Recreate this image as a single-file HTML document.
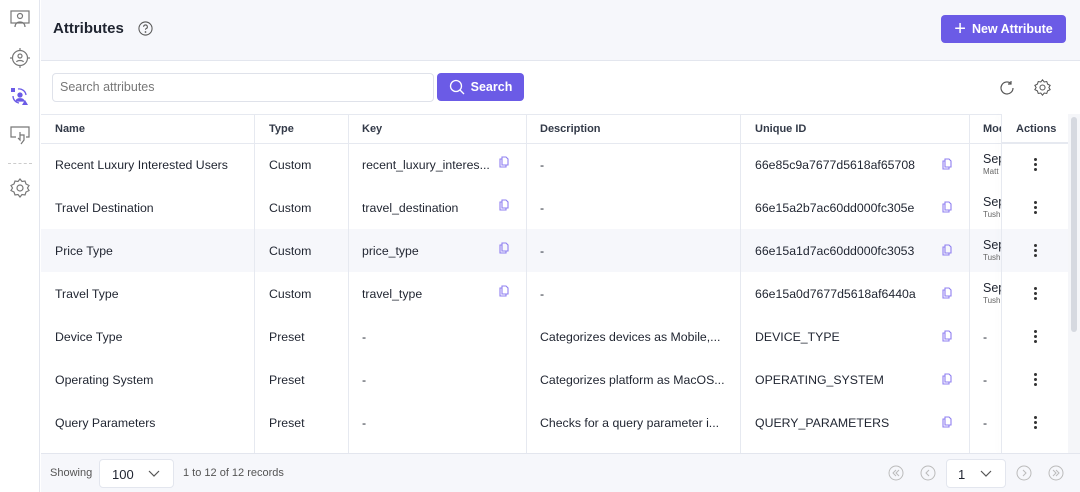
<!DOCTYPE html>
<html><head><meta charset="utf-8"><style>
*{box-sizing:border-box;margin:0;padding:0}
body{width:1080px;height:492px;overflow:hidden;background:#fff;font-family:"Liberation Sans",sans-serif;color:#1f2430;position:relative;font-size:12.3px}
.abs{position:absolute}
.side{left:0;top:0;width:40px;height:492px;background:#fff;border-right:1px solid #e3e6ee}
.hdr{left:41px;top:0;width:1039px;height:61px;background:#f6f7fb;border-bottom:1px solid #e3e6ee}
.btn{background:#6b5be6;color:#fff;border-radius:4px;font-weight:bold;font-size:12.5px;display:flex;align-items:center;justify-content:center;gap:6px}
.cell{position:absolute;display:flex;align-items:center;white-space:nowrap;overflow:hidden}
.vl{position:absolute;top:114px;width:1px;height:339px;background:#e6e9f0}
.hl{position:absolute;left:41px;width:1027px;height:1px;background:#e6e9f0}
.th{font-weight:bold;font-size:11px;color:#333a48}
.copy{position:absolute;width:10px;height:12px}
.dots{position:absolute;width:3px}
.dots i{display:block;width:3px;height:3px;border-radius:50%;background:#333;margin-bottom:2px}
</style></head><body>
<div class="abs side">
<svg class="abs" style="left:10px;top:10px" width="20" height="18" viewBox="0 0 20 18" fill="none" stroke="#777" stroke-width="1.2"><rect x="1" y="1" width="18" height="12"/><circle cx="10" cy="6" r="2.5"/><path d="M5 17c0-3 2-5 5-5s5 2 5 5"/></svg>
<svg class="abs" style="left:10px;top:48px" width="20" height="20" viewBox="0 0 20 20" fill="none" stroke="#777" stroke-width="1.2"><circle cx="10" cy="10" r="7.5"/><circle cx="10" cy="8" r="2"/><path d="M6.5 14c1-2 6-2 7 0M10 0v3M10 17v3M0 10h3M17 10h3"/></svg>
<svg class="abs" style="left:9px;top:86px" width="22" height="20" viewBox="0 0 22 20" fill="#6b5be6" stroke="#6b5be6" stroke-width="1.3"><rect x="2" y="2" width="4" height="4" stroke="none"/><circle cx="11" cy="9" r="2"/><path d="M7 15c1-3 7-3 8 0z"/><path d="M16 14l3 5h-6z" stroke="none"/><path d="M9 3a7 7 0 0 1 8 6M4 10a7 7 0 0 0 6 7" fill="none"/></svg>
<svg class="abs" style="left:10px;top:126px" width="20" height="20" viewBox="0 0 20 20" fill="none" stroke="#777" stroke-width="1.2"><path d="M6 11H1V1h18v10h-3"/><path d="M10 6v8l-2-2M10 9h4v5l-3 4"/></svg>
<div class="abs" style="left:8px;top:163px;width:24px;border-top:1px dashed #ccc"></div>
<svg class="abs" style="left:10px;top:178px" width="20" height="20" viewBox="0 0 20 20" fill="none" stroke="#777" stroke-width="1.2"><path d="M10 1l2 2.5 3-.5 1 3 3 1.5-1.5 2.5 1.5 2.5-3 1.5-1 3-3-.5L10 19l-2-2.5-3 .5-1-3-3-1.5L2.5 10 1 7.5 4 6l1-3 3 .5z"/><circle cx="10" cy="10" r="3"/></svg>
</div>
<div class="abs hdr">
<div class="abs" style="left:12px;top:20px;font-size:15px;font-weight:bold;color:#1f2430">Attributes</div>
<svg class="abs" style="left:97px;top:21px" width="15" height="15" viewBox="0 0 16 16" fill="none" stroke="#555" stroke-width="1.1"><circle cx="8" cy="8" r="7"/><path d="M6 6.2a2 2 0 1 1 2.6 1.9c-.5.2-.6.5-.6 1.2"/><circle cx="8" cy="11.7" r=".4" fill="#555"/></svg>
<div class="abs btn" style="left:900px;top:15px;width:125px;height:28px;font-size:12.5px"><span style="font-size:20px;font-weight:normal;line-height:1">+</span>New Attribute</div>
</div>
<div class="abs" style="left:52px;top:73px;width:382px;height:29px;border:1px solid #dfe2ea;border-radius:4px;padding-left:7px;line-height:27px;color:#777;font-size:12.5px">Search attributes</div>
<div class="abs btn" style="left:437px;top:73px;width:87px;height:28px"><svg width="16" height="16" viewBox="0 0 16 16" fill="none" stroke="#fff" stroke-width="1.3"><circle cx="7" cy="7" r="5.5"/><path d="M11 11l4 4"/></svg>Search</div>
<svg class="abs" style="left:999px;top:80px" width="16" height="16" viewBox="0 0 16 16" fill="none" stroke="#555" stroke-width="1.2"><path d="M14 8a6 6 0 1 1-2-4.5M12 1v3h-3"/></svg>
<svg class="abs" style="left:1034px;top:79px" width="17" height="17" viewBox="0 0 20 20" fill="none" stroke="#555" stroke-width="1.2"><path d="M10 1l2 2.5 3-.5 1 3 3 1.5-1.5 2.5 1.5 2.5-3 1.5-1 3-3-.5L10 19l-2-2.5-3 .5-1-3-3-1.5L2.5 10 1 7.5 4 6l1-3 3 .5z"/><circle cx="10" cy="10" r="3"/></svg>
<div class="hl" style="top:114px"></div>
<div class="hl" style="top:143px"></div>
<div class="abs" style="left:41px;top:229px;width:1027px;height:43px;background:#f6f7fb"></div>
<div class="vl" style="left:254px"></div><div class="vl" style="left:348px"></div><div class="vl" style="left:526px"></div><div class="vl" style="left:740px"></div><div class="vl" style="left:969px"></div>
<div class="abs" style="left:1001px;top:114px;width:1px;height:339px;background:#e6e9f0;box-shadow:-3px 0 5px rgba(0,0,0,.05)"></div>
<div class="abs" style="left:1001px;top:114px;width:67px;height:29px;background:#fff;border-bottom:1px solid #e6e9f0;border-left:1px solid #e6e9f0"></div>
<div class="abs" style="left:1068px;top:114px;width:12px;height:339px;background:#f5f6f9"></div>
<div class="abs" style="left:1071px;top:117px;width:6px;height:215px;background:#d6d9e0;border-radius:3px"></div>
<div class="cell th" style="left:55px;top:114px;height:29px">Name</div>
<div class="cell th" style="left:269px;top:114px;height:29px">Type</div>
<div class="cell th" style="left:362px;top:114px;height:29px">Key</div>
<div class="cell th" style="left:540px;top:114px;height:29px">Description</div>
<div class="cell th" style="left:755px;top:114px;height:29px">Unique ID</div>
<div class="cell th" style="left:983px;top:114px;height:29px;width:18px">Modified</div>
<div class="cell th" style="left:1016px;top:114px;height:29px">Actions</div>
<div id="rows"></div>
<div class="abs" style="left:41px;top:453px;width:1039px;height:39px;background:#f6f7fb;border-top:1px solid #e3e6ee"></div>
<div class="abs" style="left:50px;top:467px;font-size:11px;color:#555">Showing</div>
<div class="abs" style="left:99px;top:459px;width:75px;height:29px;background:#fff;border:1px solid #e3e6ee;border-radius:4px;font-size:13px;padding:7px 0 0 12px">100<svg class="abs" style="left:48px;top:10px" width="12" height="8" viewBox="0 0 12 8" fill="none" stroke="#555" stroke-width="1.2"><path d="M1 1l5 5 5-5"/></svg></div>
<div class="abs" style="left:183px;top:467px;font-size:11px;color:#555">1 to 12 of 12 records</div>
<svg class="abs" style="left:888px;top:465px;" width="180" height="16" viewBox="0 0 180 16" fill="none" stroke="#bbb" stroke-width="1"><circle cx="8" cy="8" r="7"/><path d="M8 5l-3 3 3 3M11 5l-3 3 3 3"/><circle cx="40" cy="8" r="7"/><path d="M41 5l-3 3 3 3"/><circle cx="136" cy="8" r="7"/><path d="M135 5l3 3-3 3"/><circle cx="168" cy="8" r="7"/><path d="M165 5l3 3-3 3M168 5l3 3-3 3"/></svg>
<div class="abs" style="left:946px;top:459px;width:60px;height:29px;background:#fff;border:1px solid #e3e6ee;border-radius:4px;font-size:13px;padding:7px 0 0 11px">1<svg class="abs" style="left:33px;top:10px" width="12" height="8" viewBox="0 0 12 8" fill="none" stroke="#555" stroke-width="1.2"><path d="M1 1l5 5 5-5"/></svg></div>
<script>
var R=[["Recent Luxury Interested Users","Custom","recent_luxury_interes...","-","66e85c9a7677d5618af65708","Sep","Matt",1],
["Travel Destination","Custom","travel_destination","-","66e15a2b7ac60dd000fc305e","Sep","Tush",1],
["Price Type","Custom","price_type","-","66e15a1d7ac60dd000fc3053","Sep","Tush",1],
["Travel Type","Custom","travel_type","-","66e15a0d7677d5618af6440a","Sep","Tush",1],
["Device Type","Preset","-","Categorizes devices as Mobile,...","DEVICE_TYPE","-","",0],
["Operating System","Preset","-","Categorizes platform as MacOS...","OPERATING_SYSTEM","-","",0],
["Query Parameters","Preset","-","Checks for a query parameter i...","QUERY_PARAMETERS","-","",0]];
var cp='<svg width="10" height="12" viewBox="0 0 10 12" fill="none" stroke="#8f7ff0" stroke-width="1.1"><path d="M3 1h4l2 2v6H3z"/><path d="M3 3H1v8h6V9"/></svg>';
var h='';R.forEach(function(r,i){var t=143+i*43,c=t+21;
function cell(x,s,ex){h+='<div class="cell" style="left:'+x+'px;top:'+t+'px;height:43px;'+(ex||'')+'">'+s+'</div>';}
cell(55,r[0]);cell(269,r[1]);cell(362,r[2]);cell(540,r[3]);cell(755,r[4]);
if(r[7]){h+='<div class="abs" style="left:983px;top:'+(c-12)+'px;width:18px;overflow:hidden;font-size:12.5px">'+r[5]+'</div><div class="abs" style="left:983px;top:'+(c+3)+'px;width:18px;overflow:hidden;font-size:8px;color:#666">'+r[6]+'</div>';
h+='<div class="copy" style="left:499px;top:'+(c-8)+'px">'+cp+'</div>';}
else cell(983,r[5]);
h+='<div class="copy" style="left:942px;top:'+(c-6)+'px">'+cp+'</div>';
h+='<div class="dots" style="left:1034px;top:'+(c-6)+'px"><i></i><i></i><i></i></div>';});
document.getElementById('rows').innerHTML=h;
</script>
</body></html>
